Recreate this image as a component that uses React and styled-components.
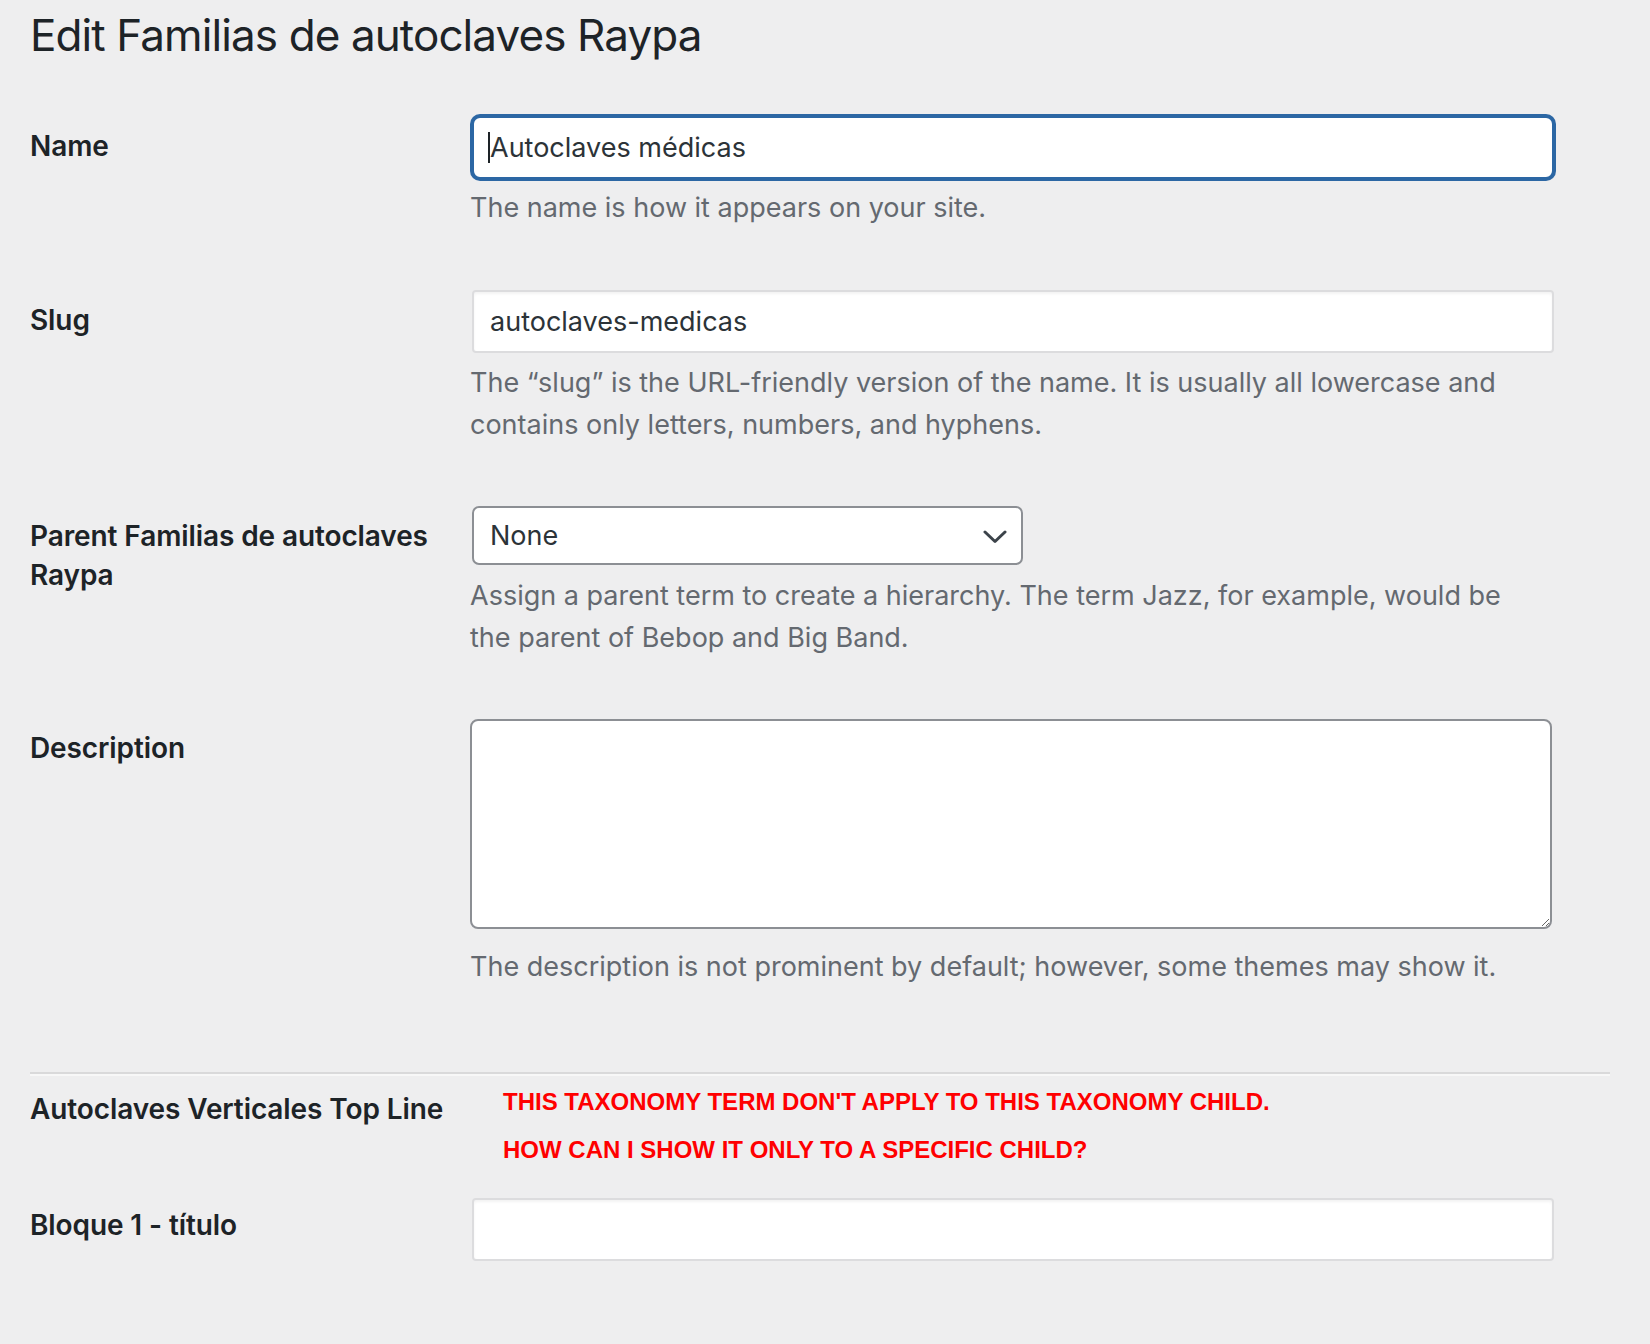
import React from "react";
import styled, { createGlobalStyle } from "styled-components";

const GlobalStyle = createGlobalStyle`
  html, body {
    margin: 0;
    padding: 0;
    background: #eeeeef;
  }
  body {
    font-family: "Inter", "Noto Sans", sans-serif;
    color: #1d2327;
  }
  * { box-sizing: border-box; }
`;

const Page = styled.div`
  width: 1650px;
  min-height: 1344px;
  padding: 0 40px 0 30px;
  display: flex;
  flex-direction: column;
`;

const Title = styled.h1`
  margin: 0;
  padding-top: 5px;
  padding-bottom: 2px;
  font-size: 44px;
  line-height: 60px;
  font-weight: 400;
  color: #1d2327;
  letter-spacing: -0.9px;
`;

const Row = styled.div`
  display: grid;
  grid-template-columns: 440px 1fr;
  padding-top: ${(p) => p.$pt}px;
`;

const Label = styled.label`
  display: block;
  padding-top: ${(p) => p.$offset ?? 11}px;
  font-size: 28px;
  line-height: 39px;
  font-weight: 600;
  color: #1d2327;
  letter-spacing: -0.1px;
  white-space: nowrap;
`;

const Field = styled.div`
  display: flex;
  flex-direction: column;
  align-items: flex-start;
`;

const TextInput = styled.input`
  display: block;
  width: 1082px;
  height: 63px;
  margin: 0 0 0 2px;
  padding: 0 16px;
  font-family: "Inter", "Noto Sans", sans-serif;
  font-size: 27px;
  color: #2c3338;
  background: #fff;
  border: 2px solid ${(p) => (p.$focused ? "#2c67a4" : "#dcdcde")};
  border-radius: ${(p) => (p.$focused ? "8px" : "4px")};
  box-shadow: ${(p) =>
    p.$focused ? "0 0 0 2px #2c67a4" : "inset 0 2px 3px rgba(0,0,0,0.05)"};
  outline: none;
`;

const InputWrap = styled.div`
  position: relative;
`;

const Caret = styled.span`
  position: absolute;
  left: 18px;
  top: 16px;
  width: 2px;
  height: 31px;
  background: #1d2327;
`;

const SelectWrap = styled.div`
  position: relative;
  margin-left: 2px;
  width: 551px;
  height: 59px;
`;

const Select = styled.select`
  appearance: none;
  -webkit-appearance: none;
  width: 100%;
  height: 100%;
  padding: 0 60px 0 16px;
  font-family: "Inter", "Noto Sans", sans-serif;
  font-size: 27px;
  color: #2c3338;
  background: #fff;
  border: 2px solid #8c8f94;
  border-radius: 7px;
  outline: none;
`;

const Chevron = styled.svg`
  position: absolute;
  right: 16px;
  top: 24px;
  pointer-events: none;
`;

const TextArea = styled.textarea`
  display: block;
  width: 1082px;
  height: 210px;
  margin: 0;
  padding: 8px 16px;
  font-family: "Inter", "Noto Sans", sans-serif;
  font-size: 27px;
  color: #2c3338;
  background: #fff;
  border: 2px solid #8c8f94;
  border-radius: 8px;
  outline: none;
  resize: both;
`;

const Help = styled.p`
  margin: ${(p) => p.$mt ?? 8}px 0 0;
  font-size: 27px;
  line-height: 42px;
  color: #646970;
  white-space: nowrap;
`;

const Separator = styled.hr`
  margin: 84px 0 0;
  width: 1580px;
  height: 0;
  border: 0;
  border-top: 2px solid #d9d9da;
  border-bottom: 2px solid #f7f7f7;
`;

const Notes = styled.div`
  display: flex;
  flex-direction: column;
  gap: 24px;
  padding-left: 33px;
`;

const Note = styled.p`
  margin: 0;
  font-family: "Liberation Sans", Arial, sans-serif;
  font-weight: 700;
  font-size: 24px;
  line-height: 24px;
  color: #ff0000;
  text-transform: uppercase;
  white-space: nowrap;
`;

export default function App() {
  return (
    <>
      <GlobalStyle />
      <Page>
        <Title>Edit Familias de autoclaves Raypa</Title>

        <Row $pt={49}>
          <Label htmlFor="tag-name">Name</Label>
          <Field>
            <InputWrap>
              <TextInput id="tag-name" $focused readOnly value="Autoclaves médicas" />
              <Caret />
            </InputWrap>
            <Help>The name is how it appears on your site.</Help>
          </Field>
        </Row>

        <Row $pt={61}>
          <Label htmlFor="slug">Slug</Label>
          <Field>
            <TextInput id="slug" readOnly value="autoclaves-medicas" />
            <Help $mt={9}>
              The “slug” is the URL-friendly version of the name. It is usually all lowercase and
              <br />
              contains only letters, numbers, and hyphens.
            </Help>
          </Field>
        </Row>

        <Row $pt={60}>
          <Label htmlFor="parent">
            Parent Familias de autoclaves
            <br />
            Raypa
          </Label>
          <Field>
            <SelectWrap>
              <Select id="parent" defaultValue="none">
                <option value="none">None</option>
              </Select>
              <Chevron width="24" height="14" viewBox="0 0 24 14">
                <polyline
                  points="2,2 12,11.5 22,2"
                  fill="none"
                  stroke="#3c434a"
                  strokeWidth="3"
                  strokeLinecap="round"
                  strokeLinejoin="round"
                />
              </Chevron>
            </SelectWrap>
            <Help $mt={10}>
              Assign a parent term to create a hierarchy. The term Jazz, for example, would be
              <br />
              the parent of Bebop and Big Band.
            </Help>
          </Field>
        </Row>

        <Row $pt={60}>
          <Label htmlFor="description" $offset={10}>Description</Label>
          <Field>
            <TextArea id="description" />
            <Help $mt={17}>
              The description is not prominent by default; however, some themes may show it.
            </Help>
          </Field>
        </Row>

        <Separator />

        <Row $pt={14}>
          <Label $offset={0}>Autoclaves Verticales Top Line</Label>
          <Notes>
            <Note>This taxonomy term don't apply to this taxonomy child.</Note>
            <Note>How can I show it only to a specific child?</Note>
          </Notes>
        </Row>

        <Row $pt={36}>
          <Label htmlFor="bloque" $offset={8}>Bloque 1 - título</Label>
          <Field>
            <TextInput id="bloque" readOnly value="" />
          </Field>
        </Row>
      </Page>
    </>
  );
}
